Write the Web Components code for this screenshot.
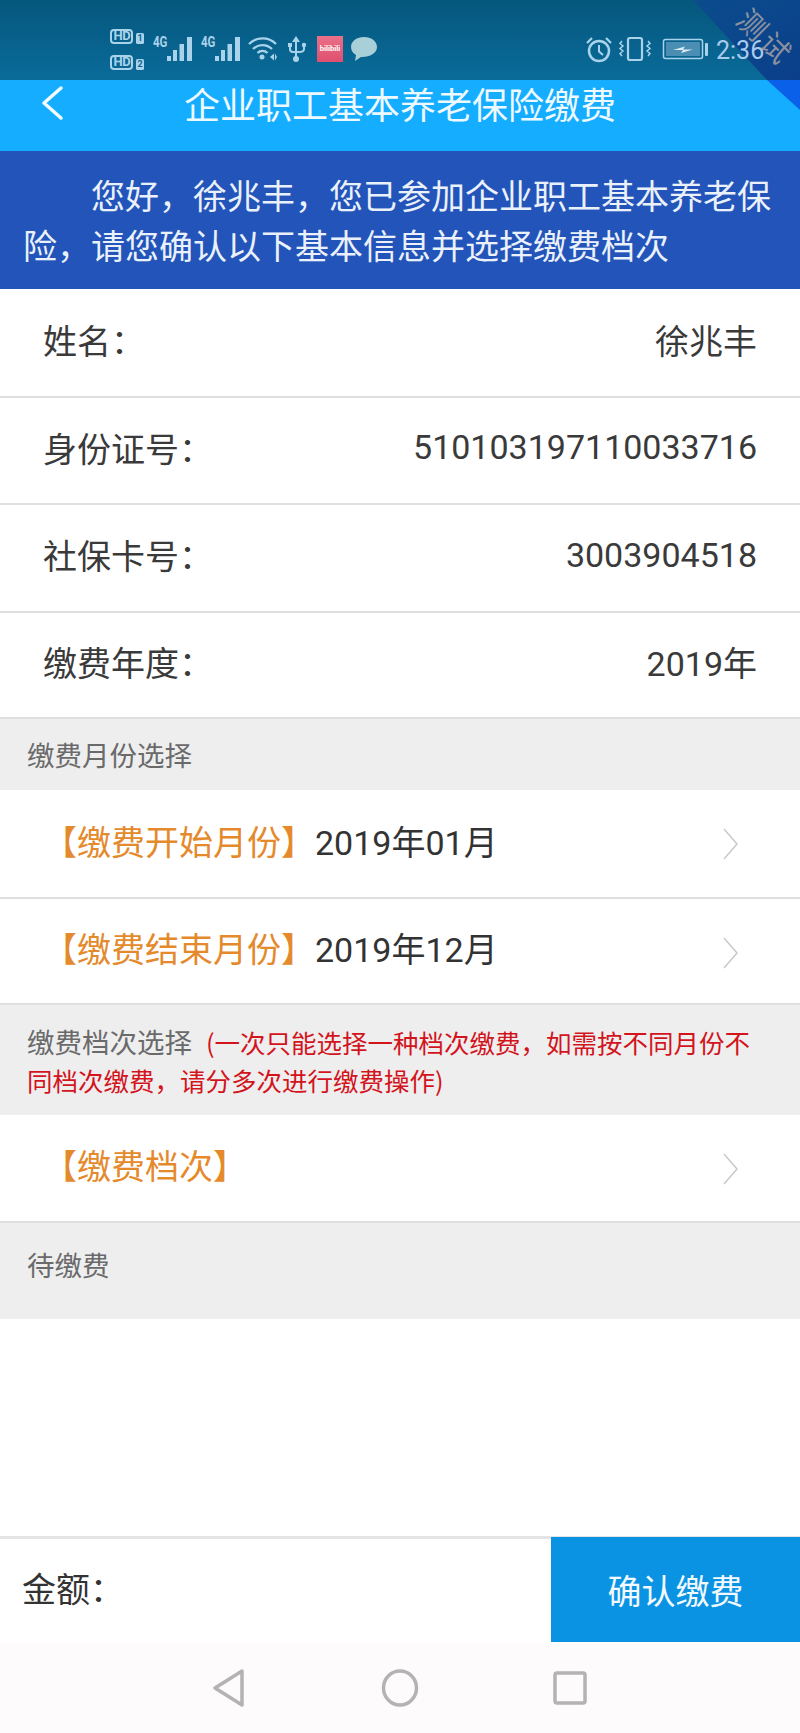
<!DOCTYPE html>
<html lang="zh"><head><meta charset="utf-8">
<style>
html,body{margin:0;padding:0;background:#fff}
body{width:800px;height:1733px;overflow:hidden;display:flex;flex-direction:column;font-family:"Noto Sans CJK SC","Liberation Sans",sans-serif}
.fill{flex:1}
</style></head><body>
<status-bar></status-bar>
<app-header>企业职工基本养老保险缴费</app-header>
<intro-banner>您好，徐兆丰，您已参加企业职工基本养老保险，请您确认以下基本信息并选择缴费档次</intro-banner>
<info-row h="108.5" label="姓名：">徐兆丰</info-row>
<info-row h="107" label="身份证号：">510103197110033716</info-row>
<info-row h="108" label="社保卡号：">3003904518</info-row>
<info-row h="106.5" label="缴费年度：">2019年</info-row>
<section-head h="71" pad="16">缴费月份选择</section-head>
<pick-row h="108.5" label="【缴费开始月份】">2019年01月</pick-row>
<pick-row h="106.5" label="【缴费结束月份】">2019年12月</pick-row>
<section-head h="110" pad="17">缴费档次选择<span slot="note">(一次只能选择一种档次缴费，如需按不同月份不</span><span slot="note2">同档次缴费，请分多次进行缴费操作)</span></section-head>
<pick-row h="107.5" label="【缴费档次】"></pick-row>
<section-head h="96" pad="22">待缴费</section-head>
<div class="fill"></div>
<pay-bar></pay-bar>
<nav-bar></nav-bar>
<script>
function def(name,html){customElements.define(name,class extends HTMLElement{connectedCallback(){if(this.shadowRoot)return;this.attachShadow({mode:'open'}).innerHTML=html(this);}});}
def('status-bar',()=>`<style>
:host{display:block;flex:none;height:80px;position:relative;background:linear-gradient(180deg,#05577d 0%,#0a6b9a 100%);color:#a9d3ea;font-family:"Roboto","Liberation Sans",sans-serif}
svg{position:absolute;left:0;top:0;display:block}
.g{position:absolute;top:35px;font-size:14px;font-weight:700;line-height:14px;transform:scaleX(.82);transform-origin:0 0;color:#a9d3ea}
.hd{position:absolute;left:112px;font-size:13px;font-weight:700;line-height:14px;width:20px;text-align:center;color:#a9d3ea;letter-spacing:-.2px}
.n{position:absolute;left:136px;width:8px;text-align:center;font-size:9px;font-weight:700;line-height:11px;color:#0b6390}
.bili{position:absolute;left:317px;top:44px;width:26px;text-align:center;font-size:7.500px;font-weight:700;line-height:10px;color:#fff}
.time{position:absolute;left:716px;top:36px;font-size:25px;line-height:30px;color:#a9cbee}
.wm{position:absolute;width:29px;height:29px;font-size:29px;line-height:29px;text-align:center;color:rgba(178,168,168,.78);transform:rotate(45deg);font-family:"Noto Sans CJK SC",sans-serif}
</style>
<svg width="800" height="80" fill="none" stroke="#a9d3ea">
<defs><linearGradient id="c" x1="0" y1="0" x2="1" y2="1"><stop offset="0" stop-color="#0b4c8c"/><stop offset="1" stop-color="#0b3f8a"/></linearGradient>
<linearGradient id="p" x1="0" y1="0" x2="0" y2="1"><stop offset="0" stop-color="#ea7088"/><stop offset="1" stop-color="#df4f6f"/></linearGradient></defs>
<polygon points="693,0 800,0 800,80 767,80" fill="url(#c)" stroke="none"/>
<rect x="111" y="30" width="21" height="13" rx="3" stroke-width="2"/><rect x="111" y="56" width="21" height="13" rx="3" stroke-width="2"/>
<rect x="136" y="33" width="8" height="11" rx="1.500" fill="#a9d3ea" stroke="none"/><rect x="136" y="59" width="8" height="11" rx="1.500" fill="#a9d3ea" stroke="none"/>
<g fill="#a9d3ea" stroke="none">
<rect x="167" y="56" width="4" height="5"/><rect x="173" y="50" width="4" height="11"/><rect x="179.500" y="44" width="4.500" height="17"/><rect x="187" y="37" width="5" height="24"/>
<rect x="215" y="56" width="4" height="5"/><rect x="221" y="50" width="4" height="11"/><rect x="227.500" y="44" width="4.500" height="17"/><rect x="235" y="37" width="5" height="24"/>
<circle cx="262" cy="57" r="2.500"/><path d="M270 57l4-3.500v7zM277 57l-2-3.500v7z"/>
</g>
<path d="M249 44a19 19 0 0 1 27 0M253 49a13.500 13.500 0 0 1 19 0M257.500 53a7 7 0 0 1 10 0" stroke-width="2.300"/>
<g fill="#a9d3ea" stroke="none"><path d="M296 36l-4 6h8z"/><circle cx="296" cy="59" r="3"/><rect x="288" y="43" width="4" height="4"/><circle cx="304" cy="45" r="2.200"/></g>
<path d="M296 41v18M290 46v3q0 3 3 3h6q5 0 5-3v-3" stroke-width="2"/>
<rect x="317" y="36" width="26" height="26" fill="url(#p)" stroke="none"/>
<path d="M364 37c-7 0-13 4-13 10 0 3.500 2 6.500 5 8l-1 6 6-4c8 .5 16-3.500 16-10 0-6-6-10-13-10z" fill="#a9cfd8" stroke="none"/>
<circle cx="599" cy="51" r="10" stroke-width="2.500"/><path d="M599 45v6.500l4 3.500" stroke-width="2"/><path d="M587 43l5-5M611 43l-5-5" stroke-width="2.200"/>
<rect x="628" y="38" width="14" height="22" rx="2" stroke-width="2.200"/>
<path d="M622 41l-2 2.500 3 2.500-3 2.500 3 2.500-3 2.500 2 2.500M648 41l2 2.500-3 2.500 3 2.500-3 2.500 3 2.500-2 2.500" stroke-width="1.500"/>
<rect x="663.500" y="39.500" width="39" height="19" rx="2" stroke-width="1.500"/><rect x="666" y="42" width="34" height="14" fill="#4a8eb3" stroke="none"/>
<rect x="705" y="43" width="3" height="13" rx="1" fill="#a9d3ea" stroke="none"/>
<path d="M673 50l12-3.500-2 3h10l-12 3.500 2-3z" fill="#dcecf3" stroke="none"/>
</svg>
<span class="hd" style="top:29px">HD</span><span class="hd" style="top:55px">HD</span>
<span class="n" style="top:33px">1</span><span class="n" style="top:59px">2</span>
<span class="g" style="left:153px">4G</span><span class="g" style="left:201px">4G</span>
<span class="bili">bilibili</span>
<span class="time">2:36</span>
<span class="wm" style="left:739px;top:9px">测</span><span class="wm" style="left:762px;top:32px">试</span>`);
def('app-header',()=>`<style>
:host{display:block;flex:none;height:71px;background:#14adff;color:#eef9ff;position:relative;font-size:36px;line-height:46px;text-align:center}
.back{position:absolute;left:40px;top:5px}
.c{position:absolute;left:767px;top:0}
.t{display:block;padding-top:0}
</style><svg class="c" width="33" height="30"><polygon points="0,0 33,0 33,30" fill="#0b60ea"/></svg><svg class="back" width="24" height="36" fill="none" stroke="#f2fbff" stroke-width="3.500" stroke-linecap="round" stroke-linejoin="round"><path d="M21 3L4 18l17 15"/></svg><span class="t"><slot></slot></span>`);
def('intro-banner',()=>`<style>
:host{display:block;flex:none;height:138px;box-sizing:border-box;background:#2354b9;color:#eaf1fb;font-size:34px;line-height:50px;padding:19px 24px 0 23px;text-indent:68px}
</style><slot></slot>`);
def('info-row',e=>`<style>
:host{display:flex;flex:none;box-sizing:border-box;height:${e.getAttribute('h')}px;align-items:center;justify-content:space-between;padding:0 43px 6px;background:#fff;color:#3a3a3a;font-size:34px;border-bottom:2px solid #dfdfdf}
.v{font-family:"Roboto","Noto Sans CJK SC",sans-serif}
</style><span>${e.getAttribute('label')}</span><span class="v"><slot></slot></span>`);
def('section-head',e=>`<style>
:host{display:block;flex:none;box-sizing:border-box;height:${e.getAttribute('h')}px;background:#eeeeef;color:#6a6a6a;font-size:27.500px;padding:${e.getAttribute('pad')}px 27px 0;line-height:39px;white-space:nowrap}
.a{display:flex;align-items:baseline;gap:14px}
.b{margin-top:-1px}
::slotted(span){color:#d3141c;font-size:25.500px;line-height:1}
</style><div class="a"><span><slot></slot></span><slot name="note"></slot></div><div class="b"><slot name="note2"></slot></div>`);
def('pick-row',e=>`<style>
:host{display:flex;flex:none;box-sizing:border-box;height:${e.getAttribute('h')}px;align-items:center;padding:0 0 6px 43px;background:#fff;color:#333;font-size:34px;border-bottom:2px solid #dfdfdf;position:relative}
.o{color:#e48a2c}
.v{font-family:"Roboto","Noto Sans CJK SC",sans-serif}
svg{position:absolute;left:721px;top:37px}
</style><span class="o">${e.getAttribute('label')}</span><span class="v"><slot></slot></span><svg width="20" height="34" fill="none" stroke="#c9c9c9" stroke-width="1.500"><path d="M3 2l13 15L3 32"/></svg>`);
def('pay-bar',()=>`<style>
:host{display:flex;flex:none;height:107px;box-sizing:border-box;border-top:3px solid #e4e4e4;background:#fff}
.a{flex:1;padding:0 0 8px 22px;display:flex;align-items:center;font-size:34px;color:#333}
.b{width:249px;height:105px;margin-top:-2px;background:#0a93e3;color:#f2f9ff;display:flex;align-items:center;justify-content:center;font-size:34px}
</style><div class="a">金额：</div><div class="b">确认缴费</div>`);
def('nav-bar',()=>`<style>
:host{display:block;flex:none;height:90px;background:#fdfbfc}
svg{display:block}
</style><svg width="800" height="90" fill="none" stroke="#b3b3b3" stroke-width="3.500" stroke-linejoin="round"><path d="M242 28L215 45l27 17z"/><ellipse cx="400" cy="45" rx="16.500" ry="17"/><rect x="555" y="30" width="30" height="30" rx="2"/></svg>`);
</script>
</body></html>
